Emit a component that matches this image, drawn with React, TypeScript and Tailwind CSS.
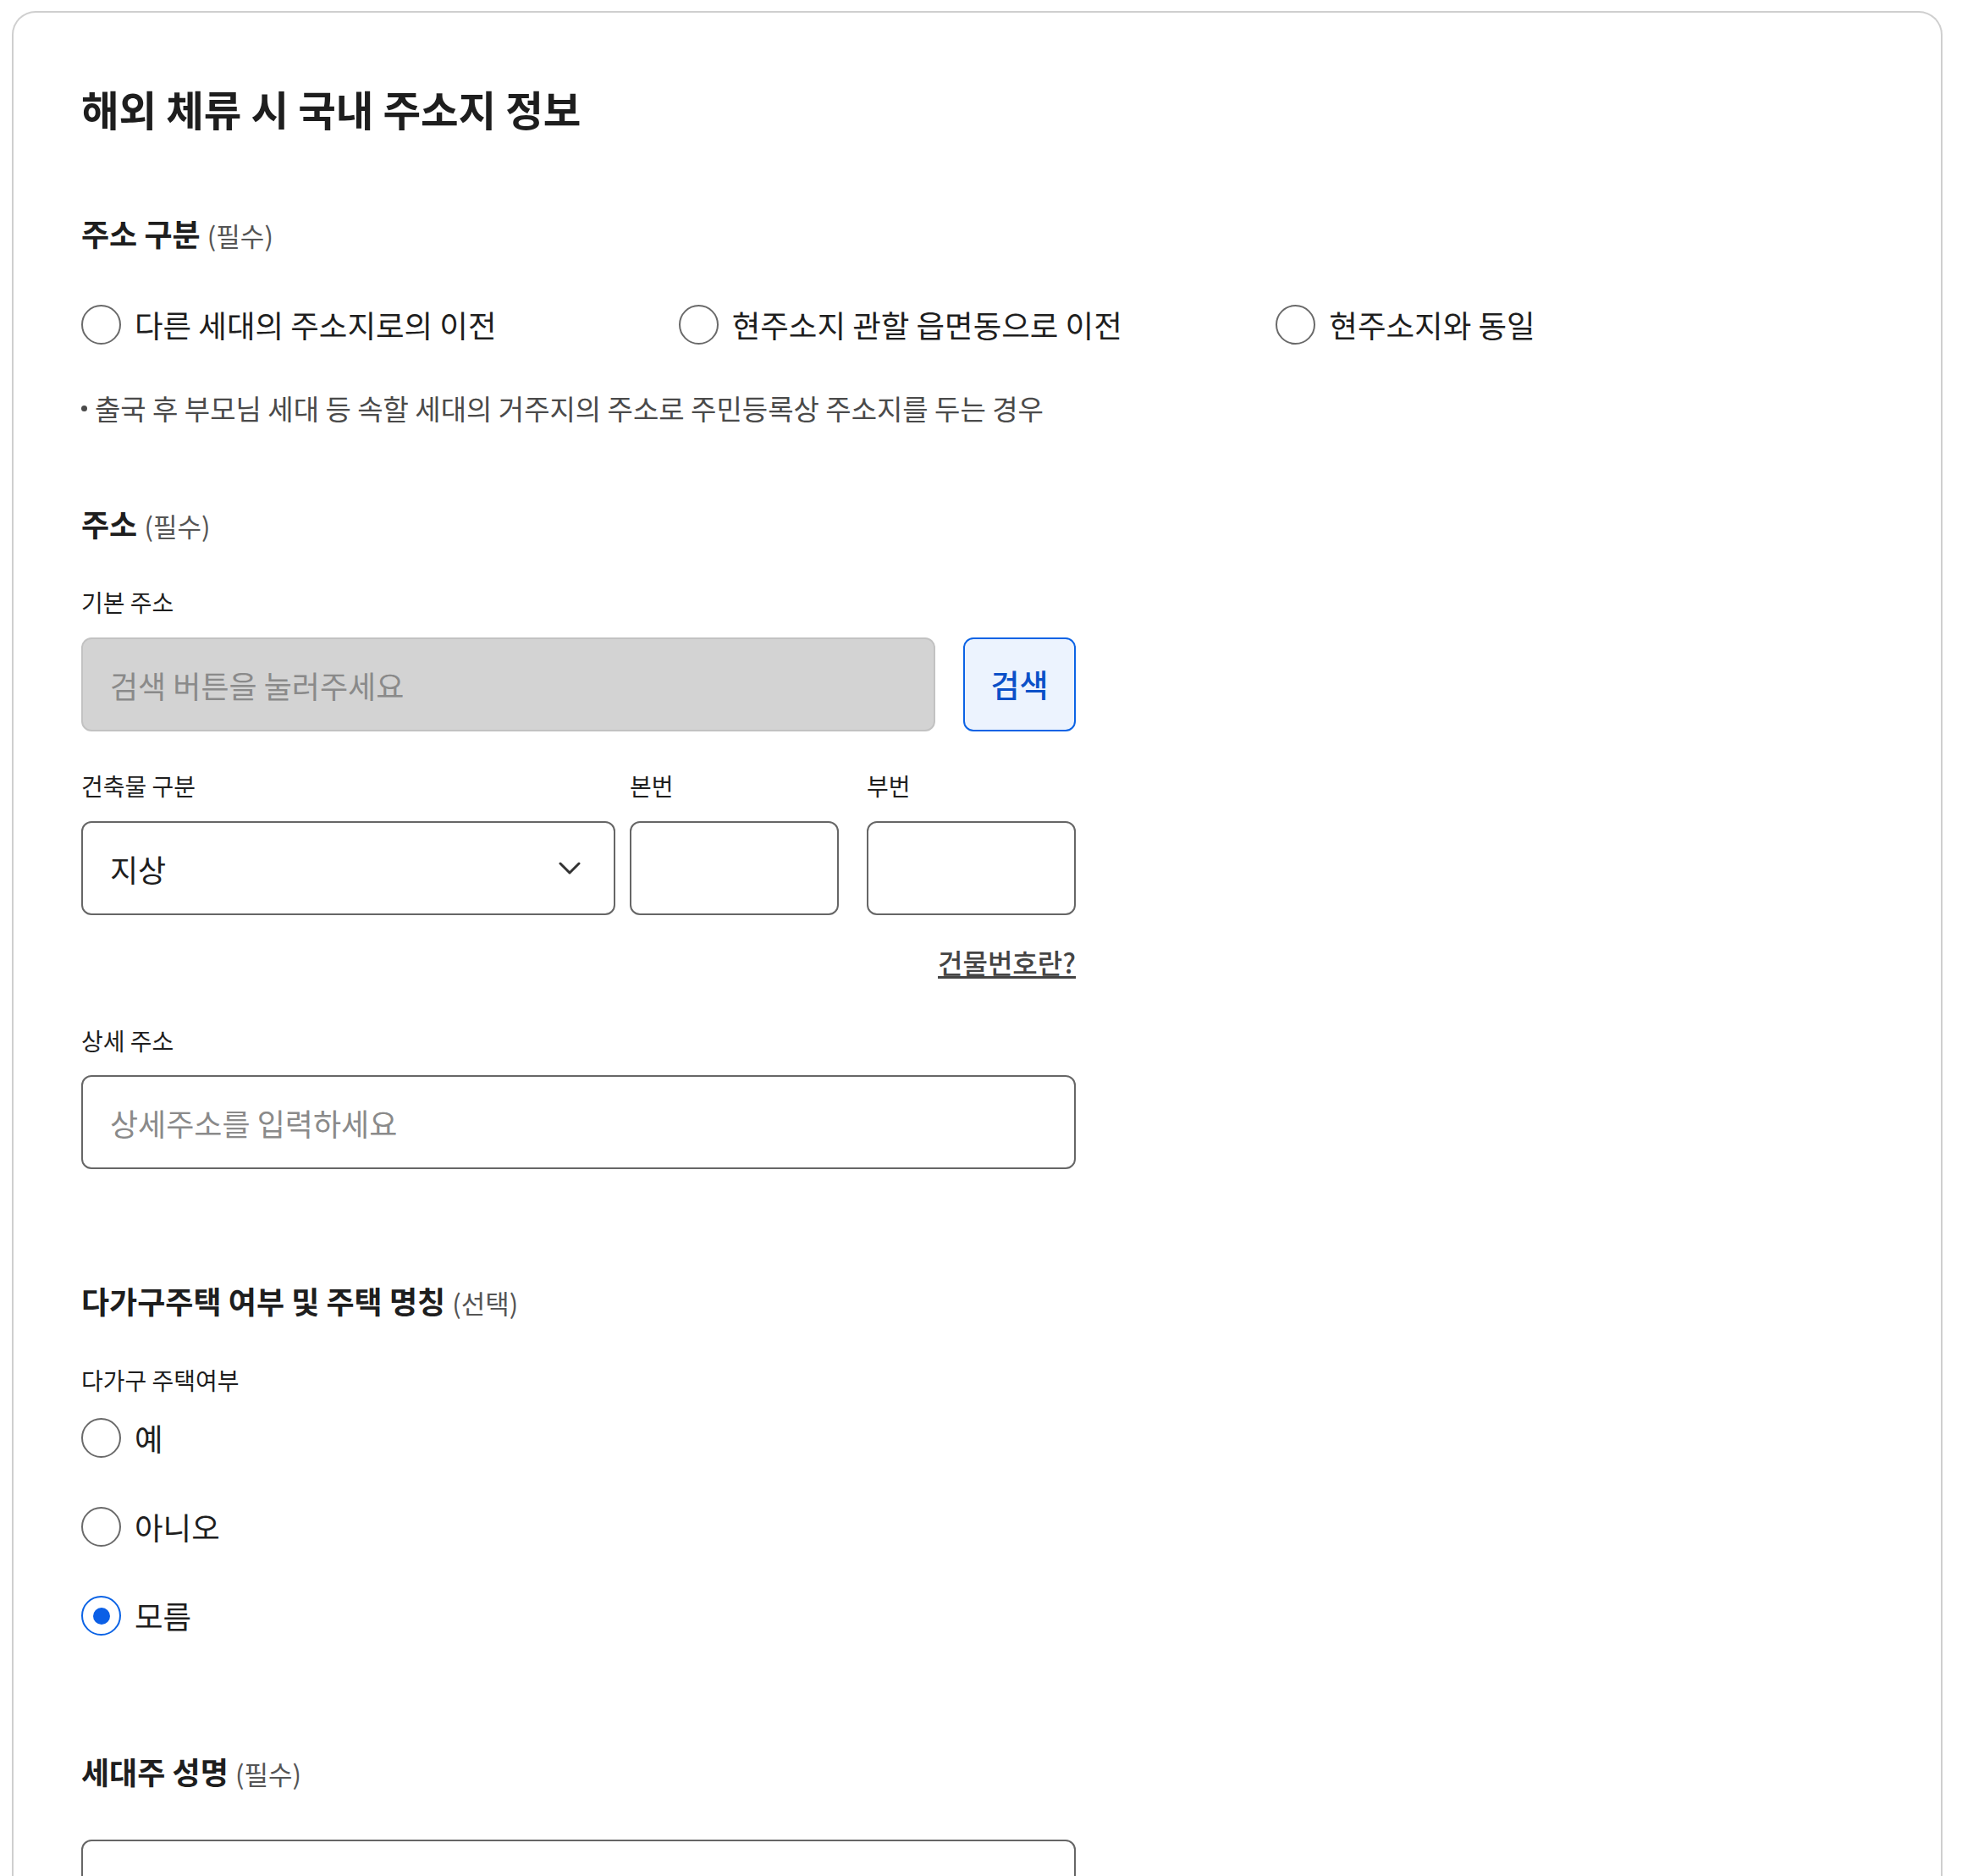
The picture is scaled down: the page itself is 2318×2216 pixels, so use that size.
import React from "react";

const FONT = "font-['Noto_Sans_CJK_KR','Noto_Sans',sans-serif]";

function SectionTitle({ title, note }: { title: string; note: string }) {
  return (
    <h3 className="text-[36px] leading-[44px] font-bold text-[#1e1e1e]">
      {title} <span className="text-[31px] font-normal text-[#555]">({note})</span>
    </h3>
  );
}

function FieldLabel({ children, className = "" }: { children: React.ReactNode; className?: string }) {
  return <div className={`text-[28px] leading-[36px] text-[#1e1e1e] ${className}`}>{children}</div>;
}

function Radio({ label, checked = false }: { label: string; checked?: boolean }) {
  return (
    <label className="flex h-[47px] items-center gap-[16px]">
      <span
        className={`flex h-[47px] w-[47px] shrink-0 items-center justify-center rounded-full border-2 ${
          checked ? "border-[#0b63e5]" : "border-[#6a6a6a]"
        }`}
      >
        {checked && <span className="h-[20px] w-[20px] rounded-full bg-[#0b5fe6]" />}
      </span>
      <span className="text-[36.5px] leading-[47px] text-[#1e1e1e]">{label}</span>
    </label>
  );
}

export default function App() {
  return (
    <div className={`h-[2216px] overflow-hidden bg-white pl-[14px] pr-[23px] pt-[13px] ${FONT}`}>
      <div className="min-h-[2400px] rounded-t-[28px] border-2 border-b-0 border-[#cfcfcf] px-[80px] pt-[81px]">
        <h2 className="text-[48.5px] leading-[64px] font-bold text-[#1e1e1e]">해외 체류 시 국내 주소지 정보</h2>

        {/* 주소 구분 */}
        <div className="mt-[93px]">
          <SectionTitle title="주소 구분" note="필수" />
        </div>
        <div className="mt-[60px] grid grid-cols-3">
          <Radio label="다른 세대의 주소지로의 이전" />
          <Radio label="현주소지 관할 읍면동으로 이전" />
          <Radio label="현주소지와 동일" />
        </div>
        <p className="mt-[53px] flex items-center text-[33px] leading-[44px] text-[#4a4a4a]">
          <span className="mr-[9px] h-[7px] w-[7px] rounded-full bg-[#4a4a4a]" />
          출국 후 부모님 세대 등 속할 세대의 거주지의 주소로 주민등록상 주소지를 두는 경우
        </p>

        {/* 주소 */}
        <div className="mt-[92px]">
          <SectionTitle title="주소" note="필수" />
        </div>
        <div className="w-[1175px]">
          <FieldLabel className="mt-[50px]">기본 주소</FieldLabel>
          <div className="mt-[24px] flex gap-[33px]">
            <input
              readOnly
              placeholder="검색 버튼을 눌러주세요"
              className="h-[111px] flex-1 rounded-[12px] border-2 border-[#c2c2c2] bg-[#d3d3d3] pl-[32px] text-[36px] text-[#1e1e1e] placeholder:text-[#8a8a8a] outline-none"
            />
            <button className="h-[111px] w-[133px] rounded-[12px] border-2 border-[#0b63e5] bg-[#ecf3fe] text-[37px] font-medium text-[#0b50c8]">
              검색
            </button>
          </div>

          <div className="mt-[46px] flex">
            <FieldLabel className="mr-[17px] w-[631px]">건축물 구분</FieldLabel>
            <FieldLabel className="mr-[33px] w-[247px]">본번</FieldLabel>
            <FieldLabel className="w-[247px]">부번</FieldLabel>
          </div>
          <div className="mt-[24px] flex">
            <div className="mr-[17px] flex h-[111px] w-[631px] items-center justify-between rounded-[12px] border-2 border-[#666] pl-[32px] pr-[39px]">
              <span className="text-[36px] text-[#1e1e1e]">지상</span>
              <svg width="26" height="16" viewBox="0 0 26 16" fill="none">
                <path d="M2 2 L13 13 L24 2" stroke="#333" strokeWidth="3" strokeLinecap="round" strokeLinejoin="round" />
              </svg>
            </div>
            <input className="mr-[33px] h-[111px] w-[247px] rounded-[12px] border-2 border-[#666] px-[20px] text-[36px] outline-none" />
            <input className="h-[111px] w-[247px] rounded-[12px] border-2 border-[#666] px-[20px] text-[36px] outline-none" />
          </div>
          <div className="mt-[35px] flex justify-end">
            <a className="text-[32px] leading-[40px] font-medium text-[#444] underline decoration-[3px] underline-offset-[3px]">
              건물번호란?
            </a>
          </div>

          <FieldLabel className="mt-[55px]">상세 주소</FieldLabel>
          <input
            placeholder="상세주소를 입력하세요"
            className="mt-[23px] h-[111px] w-full rounded-[12px] border-2 border-[#666] pl-[32px] text-[36px] text-[#1e1e1e] placeholder:text-[#8a8a8a] outline-none"
          />
        </div>

        {/* 다가구주택 */}
        <div className="mt-[133px]">
          <SectionTitle title="다가구주택 여부 및 주택 명칭" note="선택" />
        </div>
        <FieldLabel className="mt-[51px]">다가구 주택여부</FieldLabel>
        <div className="mt-[27px] flex flex-col gap-[58px]">
          <Radio label="예" />
          <Radio label="아니오" />
          <Radio label="모름" checked />
        </div>

        {/* 세대주 성명 */}
        <div className="mt-[138px]">
          <SectionTitle title="세대주 성명" note="필수" />
        </div>
        <input className="mt-[56px] h-[111px] w-[1175px] rounded-[12px] border-2 border-[#666] pl-[32px] text-[36px] outline-none" />
      </div>
    </div>
  );
}
